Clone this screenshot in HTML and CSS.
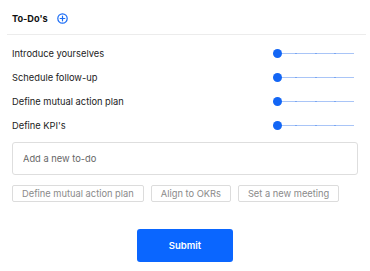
FILE: index.html
```html
<!DOCTYPE html>
<html lang="en">
<head>
    <meta charset="UTF-8">
    <meta name="viewport" content="width=device-width, initial-scale=1.0">
    <title>To-Do's</title>
    <link rel="stylesheet" href="styles.css">
</head>
<body>
    <div class="panel">
        <div class="header">
            <h2>To-Do's</h2>
            <svg class="add-icon" width="11" height="11" viewBox="0 0 11 11">
                <circle cx="5.5" cy="5.5" r="4.7" fill="none" stroke="#1a6cf5" stroke-width="1.2"/>
                <path d="M5.5 3.2v4.6M3.2 5.5h4.6" stroke="#1a6cf5" stroke-width="1.2" stroke-linecap="round"/>
            </svg>
        </div>

        <div class="todos">
            <div class="todo">
                <span>Introduce yourselves</span>
                <div class="slider"><span class="knob"></span><i></i><i></i><i></i></div>
            </div>
            <div class="todo">
                <span>Schedule follow-up</span>
                <div class="slider"><span class="knob"></span><i></i><i></i><i></i></div>
            </div>
            <div class="todo">
                <span>Define mutual action plan</span>
                <div class="slider"><span class="knob"></span><i></i><i></i><i></i></div>
            </div>
            <div class="todo">
                <span>Define KPI's</span>
                <div class="slider"><span class="knob"></span><i></i><i></i><i></i></div>
            </div>
        </div>

        <input class="new-todo" type="text" placeholder="Add a new to-do">

        <div class="suggestions">
            <button class="chip">Define mutual action plan</button>
            <button class="chip">Align to OKRs</button>
            <button class="chip">Set a new meeting</button>
        </div>

        <div class="actions">
            <button class="submit-btn">Submit</button>
        </div>
    </div>
</body>
</html>
```

FILE: styles.css
```css
body {
    margin: 0;
    font-family: Inter, "Noto Sans", sans-serif;
    color: #1f1f1f;
    background: #fff;
}
.panel {
    width: 370px;
    padding-bottom: 9px;
}
.header {
    display: flex;
    align-items: center;
    gap: 9px;
    height: 35px;
    margin: 0 4px 0 7px;
    padding: 3px 0 0 5px;
    border-bottom: 1px solid #ececec;
    box-sizing: border-box;
}
.header h2 {
    margin: 0;
    font-size: 9.2px;
    font-weight: 700;
    color: #111;
}
.add-icon {
    display: block;
}
.todos {
    display: flex;
    flex-direction: column;
    padding: 6px 16px 0 12px;
}
.todo {
    display: flex;
    justify-content: space-between;
    align-items: center;
    height: 24px;
    font-size: 9.3px;
    color: #222;
}
.slider {
    position: relative;
    width: 81px;
    height: 9px;
    display: flex;
    align-items: center;
    justify-content: space-evenly;
    padding-left: 4.5px;
    box-sizing: border-box;
}
.slider::before {
    content: "";
    position: absolute;
    left: 4px;
    right: 0;
    top: 4px;
    height: 1px;
    background: #a9c5f7;
}
.slider i {
    position: relative;
    width: 2px;
    height: 1px;
    background: #7aa6f2;
}
.knob {
    position: absolute;
    left: 0;
    top: 0;
    width: 9px;
    height: 9px;
    border-radius: 50%;
    background: #1366f5;
    z-index: 1;
}
.new-todo {
    display: block;
    box-sizing: border-box;
    width: 346px;
    height: 33px;
    margin: 5px 0 0 12px;
    padding: 0 10px;
    border: 1px solid #dedede;
    border-radius: 3px;
    font-family: inherit;
    font-size: 9.3px;
    outline: none;
}
.new-todo::placeholder {
    color: #666;
}
.suggestions {
    display: flex;
    gap: 7px;
    margin: 10px 0 0 12px;
}
.chip {
    height: 17px;
    padding: 0 9px;
    background: #fff;
    border: 1px solid #dcdcdc;
    border-radius: 2px;
    font-family: inherit;
    font-size: 9.3px;
    color: #8a8a8a;
    white-space: nowrap;
}
.actions {
    display: flex;
    justify-content: center;
    margin-top: 27px;
}
.submit-btn {
    width: 96px;
    height: 33px;
    border: none;
    border-radius: 3px;
    background: #0a66ff;
    color: #fff;
    font-family: inherit;
    font-size: 9.5px;
    font-weight: 600;
}
```
